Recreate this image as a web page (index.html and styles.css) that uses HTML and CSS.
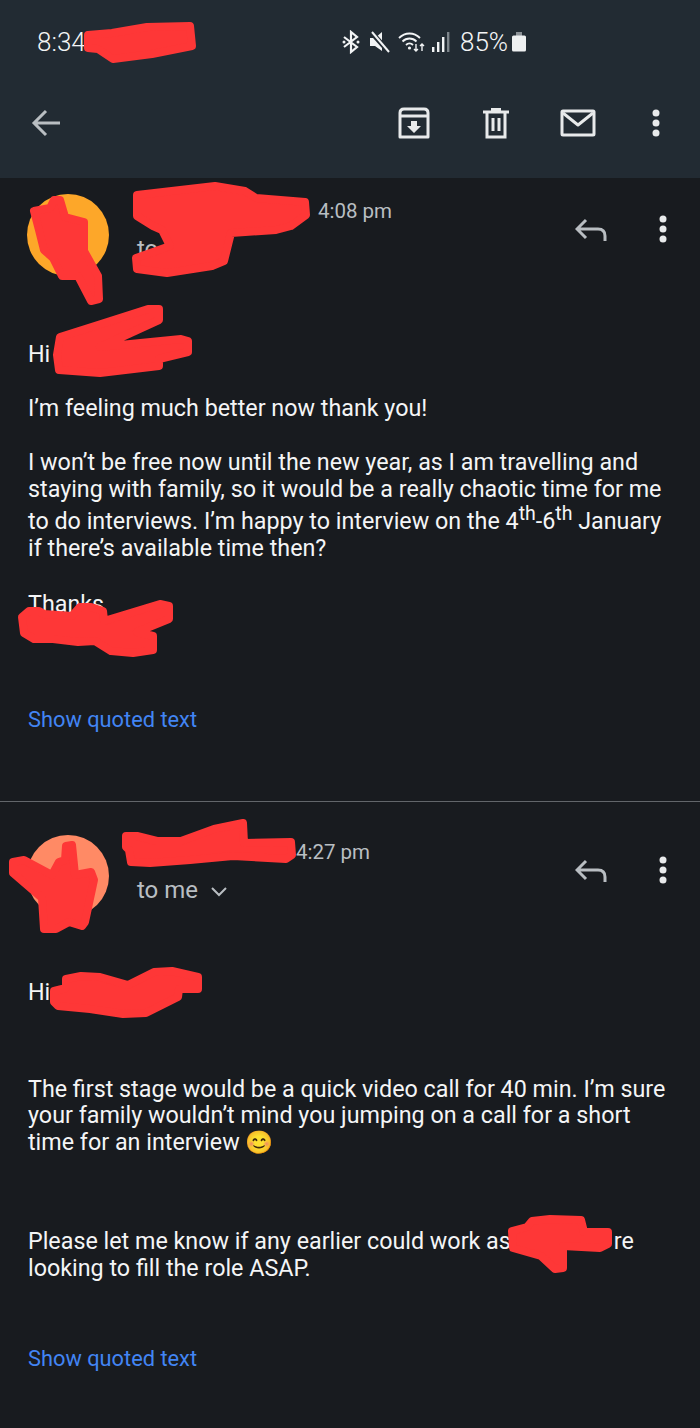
FILE: index.html
```html
<!DOCTYPE html>
<html lang="en">
<head>
    <meta charset="UTF-8">
    <meta name="viewport" content="width=device-width, initial-scale=1.0">
    <title>Email thread</title>
    <link rel="stylesheet" href="styles.css">
</head>
<body>
    <header class="top">
        <div class="status">
            <span class="clock">8:34</span>
            <svg class="st-bt" width="20" height="24" viewBox="0 0 20 24"><path d="M3 7l13 10-6 5V2l6 5L3 17" fill="none" stroke="#f2f4f5" stroke-width="2.2"/><circle cx="3" cy="12" r="1.5" fill="#f2f4f5"/><circle cx="17" cy="12" r="1.5" fill="#f2f4f5"/></svg>
            <svg class="st-mute" width="22" height="24" viewBox="0 0 22 24"><path d="M1 8h5l7-6v19l-7-5H1z" fill="#f2f4f5"/><path d="M3 3l17 19" stroke="#222b33" stroke-width="5"/><path d="M3 2l17 20" stroke="#f2f4f5" stroke-width="2"/></svg>
            <svg class="st-wifi" width="28" height="24" viewBox="0 0 28 24"><g fill="none" stroke="#f2f4f5" stroke-width="1.8"><path d="M1 8c6-6 15-6 21 0"/><path d="M4.500 11.500c4-4 10-4 14 0"/><path d="M8 15c2-2 5-2 7 0"/></g><circle cx="11.500" cy="18" r="1.600" fill="#f2f4f5"/><path d="M18 14v7m-2-2l2 2 2-2M24 21v-7m-2 2l2-2 2 2" fill="none" stroke="#f2f4f5" stroke-width="1.400"/></svg>
            <svg class="st-signal" width="18" height="24" viewBox="0 0 18 24"><rect x="0" y="17" width="2.400" height="5" fill="#f2f4f5"/><rect x="5" y="12" width="2.400" height="10" fill="#f2f4f5"/><rect x="10" y="7" width="2.400" height="15" fill="#f2f4f5"/><rect x="15" y="2" width="2.400" height="20" fill="#7d858b"/></svg>
            <span class="pct">85%</span>
            <svg class="st-batt" width="16" height="24" viewBox="0 0 16 24"><path d="M5 2h6v4H5z" fill="#8b9196"/><path d="M1 7q0-1.500 1.500-1.500h11Q15 5.500 15 7v13q0 1.500-1.500 1.500h-11Q1 21.500 1 20z" fill="#eef0f1"/></svg>
        </div>
        <div class="actions">
            <svg class="back" width="32" height="32" viewBox="0 0 32 32"><path d="M30 16H5M16 4L4 16l12 12" fill="none" stroke="#b9bec2" stroke-width="3"/></svg>
            <div class="action-icons">
                <svg width="32" height="32" viewBox="0 0 32 32"><g fill="none" stroke="#e8eaeb" stroke-width="3" stroke-linejoin="round"><path d="M2 6q0-4 4-4h20q4 0 4 4v24H2z"/><path d="M2 9h28"/></g><path d="M13 14h6v5h4l-7 7-7-7h4z" fill="#e8eaeb"/></svg>
                <svg width="28" height="32" viewBox="0 0 28 32"><g fill="none" stroke="#e8eaeb" stroke-width="3"><path d="M1 5h26M5 5v25h18V5"/><path d="M11 11v13M17 11v13"/></g><path d="M9 1h10v4H9z" fill="#e8eaeb"/></svg>
                <svg width="36" height="32" viewBox="0 0 36 32"><g fill="none" stroke="#e8eaeb" stroke-width="3" stroke-linejoin="round"><rect x="2" y="4" width="32" height="24" rx="1"/><path d="M3 6l15 12L33 6"/></g></svg>
                <svg class="dots" width="8" height="32" viewBox="0 0 8 32"><circle cx="4" cy="6" r="3.500"/><circle cx="4" cy="16" r="3.500"/><circle cx="4" cy="26" r="3.500"/></svg>
            </div>
        </div>
    </header>

    <article class="mail mail-first">
        <div class="mail-head">
            <div class="avatar avatar-amber"></div>
            <div class="who">
                <div class="name-row"><span class="sender"></span><span class="time">4:08 pm</span></div>
                <div class="to">to me <svg width="18" height="12" viewBox="0 0 18 12"><path d="M2 2l7 7 7-7" fill="none" stroke="#b9bec2" stroke-width="2"/></svg></div>
            </div>
            <svg class="reply" width="32" height="26" viewBox="0 0 32 26"><path d="M30 24v-5q0-7-7-7H3M11 3l-9 9 9 9" fill="none" stroke="#b9bec2" stroke-width="3"/></svg>
            <svg class="dots dots-mail" width="8" height="30" viewBox="0 0 8 30"><circle cx="4" cy="5" r="3.500"/><circle cx="4" cy="15" r="3.500"/><circle cx="4" cy="25" r="3.500"/></svg>
        </div>
        <div class="mail-body">
            <p class="hi">Hi</p>
            <p class="feeling">I’m feeling much better now thank you!</p>
            <p>I won’t be free now until the new year, as I am travelling and staying with family, so it would be a really chaotic time for me to do interviews. I’m happy to interview on the 4<sup>th</sup>-6<sup>th</sup> January if there’s available time then?</p>
            <p class="thanks">Thanks</p>
        </div>
        <a class="quoted" href="#">Show quoted text</a>
    </article>

    <article class="mail mail-second">
        <div class="mail-head">
            <div class="avatar avatar-salmon"></div>
            <div class="who">
                <div class="name-row"><span class="sender sender-b"></span><span class="time">4:27 pm</span></div>
                <div class="to">to me <svg width="18" height="12" viewBox="0 0 18 12"><path d="M2 2l7 7 7-7" fill="none" stroke="#b9bec2" stroke-width="2"/></svg></div>
            </div>
            <svg class="reply" width="32" height="26" viewBox="0 0 32 26"><path d="M30 24v-5q0-7-7-7H3M11 3l-9 9 9 9" fill="none" stroke="#b9bec2" stroke-width="3"/></svg>
            <svg class="dots dots-mail" width="8" height="30" viewBox="0 0 8 30"><circle cx="4" cy="5" r="3.500"/><circle cx="4" cy="15" r="3.500"/><circle cx="4" cy="25" r="3.500"/></svg>
        </div>
        <div class="mail-body">
            <p class="hi-b">Hi</p>
            <p class="para-b">The first stage would be a quick video call for 40 min. I’m sure your family wouldn’t mind you jumping on a call for a short time for an interview <span class="smile">😊</span></p>
            <p class="para-c">Please let me know if any earlier could work as<span class="blanked"></span>re looking to fill the role ASAP.</p>
        </div>
        <a class="quoted" href="#">Show quoted text</a>
    </article>

    <!-- red marker scribbles drawn over the screenshot -->
    <svg class="scribbles" width="700" height="1428" viewBox="0 0 700 1428">
        <g fill="#fe3737" stroke="#fe3737" stroke-width="8" stroke-linejoin="round">
            <path d="M88 35L112 33 147 27 190 26 192 46 152 54 113 59 98 49 88 48z"/>
            <path d="M137 195L215 186 245 191 256 198 305 202 306 215 291 226 276 230 231 233 224 261 212 266 167 273 137 269 136 258 170 246 162 230 153 226 137 216z"/>
            <path d="M34 211L50 208 54 200 60 200 65 217 84 222 84 251 98 276 99 299 91 301 78 276 62 276 53 258 44 250 39 230z"/>
            <path d="M60 337L101 324 148 309 159 309 159 320 100 347 181 339 188 341 188 352 159 359 159 366 100 373 59 370 57 355z"/>
            <path d="M22 617L29 611 39 611 44 614 72 616 80 607 91 607 103 611 104 621 160 604 169 606 169 619 137 632 153 636 153 650 133 653 111 651 95 641 78 642 53 639 34 639 24 633z"/>
            <path d="M126 836L137 836 157 841 181 841 214 829 243 823 244 843 291 842 292 855 286 859 233 856 190 860 150 863 131 862 129 850 126 847z"/>
            <path d="M13 862L24 860 52 875 59 862 65 860 66 846 72 845 75 875 91 872 94 880 85 922 82 926 69 922 56 929 44 929 42 898 13 873z"/>
            <path d="M66 979L81 976 100 977 128 985 154 972 172 971 198 977 198 989 179 989 178 997 146 1013 123 1014 90 1009 58 1006 54 1002 54 991 66 988z"/>
            <path d="M512 1231L527 1227 532 1221 550 1219 581 1220 584 1232 608 1232 608 1244 600 1248 563 1246 563 1268 555 1269 541 1256 513 1248z"/>
        </g>
    </svg>
</body>
</html>
```

FILE: styles.css
```css
* {
    box-sizing: border-box;
}
body {
    margin: 0;
    background-color: #181b1f;
    font-family: Roboto, "Liberation Sans", sans-serif;
    color: #f4f5f6;
    position: relative;
    height: 1428px;
    overflow: hidden;
}

/* top bar */
.top {
    height: 178px;
    background-color: #222b33;
    padding: 0 40px 0 30px;
}
.status {
    height: 84px;
    display: flex;
    align-items: center;
}
.clock {
    font-size: 26px;
    font-weight: 300;
    margin-left: 7px;
    width: 48px;
}
.st-bt {
    margin-left: 256px;
}
.st-mute {
    margin-left: 8px;
}
.st-wifi {
    margin-left: 7px;
}
.st-signal {
    margin-left: 6px;
}
.pct {
    font-size: 26px;
    font-weight: 300;
    margin-left: 10px;
}
.st-batt {
    margin-left: 3px;
}
.actions {
    height: 78px;
    display: flex;
    align-items: center;
    justify-content: space-between;
}
.action-icons {
    display: flex;
    align-items: center;
    gap: 50px;
}
.action-icons svg:first-child {
    margin-right: 1.5px;
}
.action-icons .dots {
    margin-left: 6.5px;
}
.dots {
    fill: #e8eaeb;
}

/* mail */
.mail {
    padding: 0 28px;
}
.mail-first {
    height: 624px;
    border-bottom: 1px solid #62666a;
}
.mail-second {
    height: 626px;
}
.mail-head {
    display: flex;
    align-items: flex-start;
    padding-top: 16px;
}
.mail-second .mail-head {
    padding-top: 33px;
}
.avatar {
    width: 82px;
    height: 82px;
    border-radius: 50%;
    margin-left: -1px;
}
.avatar-amber {
    background-color: #fda729;
}
.avatar-salmon {
    background-color: #ff8a65;
}
.who {
    margin-left: 28px;
    flex: 1;
}
.name-row {
    display: flex;
    align-items: center;
    height: 34px;
}
.sender {
    width: 181px;
}
.sender-b {
    width: 159px;
}
.time {
    font-size: 20.5px;
    color: #b9bec2;
}
.to {
    font-size: 24px;
    color: #b9bec2;
    margin-top: 7px;
}
.to svg {
    margin-left: 6px;
}
.reply {
    margin-top: 23px;
    margin-right: 52px;
}
.dots-mail {
    margin-top: 20px;
    margin-right: 5px;
}
.mail-body {
    font-size: 23.3px;
    line-height: 26.6px;
    padding-right: 6px;
}
.mail-body p {
    margin: 0;
}
.mail-body sup {
    font-size: 19.5px;
    line-height: 24.5px;
    vertical-align: 9px;
}
.hi {
    padding-top: 65px;
}
.mail-body p + p {
    margin-top: 28px;
}
.mail-body p.feeling {
    margin-top: 27px;
}
.mail-first .mail-body p.thanks {
    margin-top: 29px;
}
.quoted {
    display: block;
    margin-top: 90px;
    font-size: 21.8px;
    color: #4285f4;
    text-decoration: none;
}
.hi-b {
    padding-top: 62px;
}
.mail-body p.para-b {
    margin-top: 70px;
}
.mail-body p.para-c {
    margin-top: 73px;
}
.mail-second .quoted {
    margin-top: 64px;
}
.smile {
    font-size: 22.5px;
}
.blanked {
    display: inline-block;
    width: 103px;
}

/* scribbles lie over everything */
.scribbles {
    position: absolute;
    top: 0;
    left: 0;
}
```
